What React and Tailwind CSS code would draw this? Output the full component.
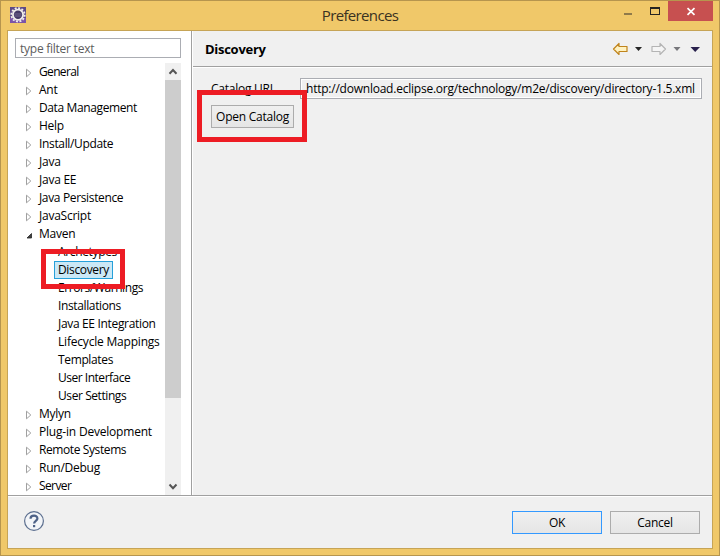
import React from 'react';

const TREE = [
  { t: 'General', k: 'tracking-[-0.65px]' },
  { t: 'Ant' },
  { t: 'Data Management', k: 'tracking-[-0.38px]' },
  { t: 'Help' },
  { t: 'Install/Update', k: 'tracking-[-0.35px]' },
  { t: 'Java' },
  { t: 'Java EE' },
  { t: 'Java Persistence', k: 'tracking-[-0.35px]' },
  { t: 'JavaScript' },
  { t: 'Maven', open: true },
  { t: 'Archetypes', child: true, k: 'tracking-[-0.35px]' },
  { t: 'Discovery', child: true, selected: true, k: 'tracking-[-0.35px]' },
  { t: 'Errors/Warnings', child: true, k: 'tracking-[-0.42px]' },
  { t: 'Installations', child: true, k: 'tracking-[-0.37px]' },
  { t: 'Java EE Integration', child: true, k: 'tracking-[-0.33px]' },
  { t: 'Lifecycle Mappings', child: true, k: 'tracking-[-0.2px]' },
  { t: 'Templates', child: true, k: 'tracking-[-0.36px]' },
  { t: 'User Interface', child: true, k: 'tracking-[-0.48px]' },
  { t: 'User Settings', child: true, k: 'tracking-[-0.42px]' },
  { t: 'Mylyn' },
  { t: 'Plug-in Development', k: 'tracking-[-0.2px]' },
  { t: 'Remote Systems', k: 'tracking-[-0.4px]' },
  { t: 'Run/Debug' },
  { t: 'Server', k: 'tracking-[-0.6px]' },
];

function Twisty({ open }) {
  return (
    <svg className="h-[18px] w-[7px] shrink-0" viewBox="0 0 7 18">
      {open ? (
        <path d="M5.5 8.5V13H1Z" fill="#404040" stroke="#262626" strokeWidth="0.8" />
      ) : (
        <path d="M0.5 6.2V13.8L4.8 10Z" fill="#fff" stroke="#a0a0a0" />
      )}
    </svg>
  );
}

function Row({ item }) {
  if (item.child) {
    return (
      <div className={`flex h-[18px] pl-[39px] leading-[18px] ${item.k || ''}`}>
        <span
          className={
            item.selected
              ? 'relative w-[59px] border border-[#26a0da] bg-[#cbe8f6] pl-[3px] leading-[16px]'
              : 'pl-1'
          }
        >
          {item.t}
          {item.selected && (
            <span className="absolute -left-[14px] -top-[13px] h-[40px] w-[84px] border-[5px] border-[#ed1c24]" />
          )}
        </span>
      </div>
    );
  }
  return (
    <div className={`flex h-[18px] pl-[11px] leading-[18px] ${item.k || ''}`}>
      <Twisty open={item.open} />
      <span className="ml-[6px]">{item.t}</span>
    </div>
  );
}

function EclipseIcon() {
  return (
    <svg className="mt-[6px] h-4 w-4" viewBox="0 0 16 16">
      <rect width="16" height="16" fill="#5d4a86" />
      <path d="M0 11h16v5H0z" fill="#7b54a8" />
      <circle cx="8" cy="7.8" r="6.7" fill="none" stroke="#efedeb" strokeWidth="1.8" strokeDasharray="2 1.5" />
      <circle cx="8" cy="7.8" r="5.1" fill="#453a66" stroke="#efedeb" strokeWidth="1.8" />
      <path d="M4.2 7h7.6M4.4 9h7.2" stroke="#7e749b" strokeWidth="0.8" />
    </svg>
  );
}

function TitleBar() {
  return (
    <div className="relative flex h-[29px] pl-[9px]">
      <EclipseIcon />
      <div className="absolute inset-x-0 top-[3px] text-center text-[15px] leading-[22px] tracking-[-0.65px] text-[#3a3222]">
        Preferences
      </div>
      <div className="ml-auto mr-[6px] flex">
        <svg className="h-5 w-[45px]" viewBox="0 0 45 20">
          <path d="M1 12h8v2H1z" fill="#8f7a4a" />
          <path d="M27 6h10v8H27zM28 8v5h8V8z" fillRule="evenodd" fill="#262421" />
        </svg>
        <div className="h-5 w-[45px] bg-[#c75050]">
          <svg className="h-5 w-[45px]" viewBox="0 0 45 20">
            <path d="M19.5 7.2l7 6.6M26.5 7.2l-7 6.6" stroke="#fff" strokeWidth="1.7" />
          </svg>
        </div>
      </div>
    </div>
  );
}

function Sidebar() {
  return (
    <div className="w-[184px] shrink-0 border-r border-[#a0a0a0] bg-white pt-[7px]">
      <div className="ml-[7px] h-5 w-[166px] border border-[#abadb3] pl-[4px] leading-[19px] text-[#5c5c5c]">
        type filter text
      </div>
      <div className="mt-[5px] flex h-[432px] pl-[7px]">
        <div className="w-[150px] whitespace-nowrap">
          {TREE.map((item) => (
            <Row key={item.t} item={item} />
          ))}
        </div>
        <div className="flex h-[432px] w-4 flex-col bg-[#f0f0f0]">
          <svg className="h-[17px] w-4" viewBox="0 0 16 17">
            <path d="M4.5 10.7L8 7l3.5 3.7" fill="none" stroke="#555" strokeWidth="2" />
          </svg>
          <div className="h-[318px] bg-[#cdcdcd]" />
          <svg className="mt-auto h-[17px] w-4" viewBox="0 0 16 17">
            <path d="M4.5 6.5L8 10.2l3.5-3.7" fill="none" stroke="#555" strokeWidth="2" />
          </svg>
        </div>
      </div>
    </div>
  );
}

function NavIcons() {
  return (
    <svg className="ml-auto mr-2 h-[18px] w-[92px]" viewBox="0 0 92 18">
      <path
        d="M1.5 9L7 3.5V6.5h8v5H7v3z"
        fill="#fff2c0"
        stroke="#c0841c"
        strokeWidth="1.2"
        strokeLinejoin="round"
      />
      <path d="M23 7h7l-3.5 4z" fill="#262626" />
      <path
        d="M53.5 9L48 3.5V6.5h-8v5h8v3z"
        fill="#f5f5f5"
        stroke="#b4b4b4"
        strokeWidth="1.2"
        strokeLinejoin="round"
      />
      <path d="M61.5 7h7L65 11z" fill="#77777b" />
      <path d="M78.5 7h9.5L83.2 12z" fill="#28204c" />
    </svg>
  );
}

function Content() {
  return (
    <div className="flex-1 border-l border-white">
      <div className="flex h-[36px] items-center border-b border-[#a0a0a0] pl-3">
        <h1 className="pt-px text-[13px] font-bold leading-[18px] tracking-[-0.28px]">Discovery</h1>
        <NavIcons />
      </div>
      <div className="border-t border-white pl-[18px] pt-[10px]">
        <div className="flex">
          <span className="w-[89px] shrink-0 leading-[21px]">Catalog URL</span>
          <div className="h-[21px] w-[402px] whitespace-nowrap border border-[#abadb3]">
            <div className="h-[19px] border border-white pl-[4px] leading-[17px] tracking-[-0.23px]">
              http://download.eclipse.org/technology/m2e/discovery/directory-1.5.xml
            </div>
          </div>
        </div>
        <div className="relative mt-[6px] h-[23px] w-[83px] border border-[#acacac] bg-gradient-to-b from-[#f0f0f0] to-[#e5e5e5] text-center leading-[22px]">
          <span className="whitespace-nowrap">Open Catalog</span>
          <span className="absolute -left-[15px] -top-[16px] h-[52px] w-[110px] border-[5px] border-[#ed1c24]" />
        </div>
      </div>
    </div>
  );
}

function Footer() {
  return (
    <div className="flex h-[52px] border-t border-white pt-[14px]">
      <svg className="ml-[15px] h-[22px] w-[22px]" viewBox="0 0 22 22">
        <circle cx="11" cy="10" r="9.4" fill="#f3f5f8" stroke="#5c6f8f" strokeWidth="1.2" />
        <path d="M7.5 7.8C7.6 3.7 14.5 3.7 14.4 7.6c-.1 2.2-3.3 2.3-3.3 4.9" fill="none" stroke="#4e6287" strokeWidth="2.2" />
        <path d="M10 14h2.2v2.2H10z" fill="#4e6287" />
      </svg>
      <div className="ml-auto mr-[12px] flex gap-2 text-center leading-[22px]">
        <div className="h-[23px] w-[90px] border border-[#3399ff] bg-gradient-to-b from-[#f0f0f0] to-[#e5e5e5]">OK</div>
        <div className="h-[23px] w-[90px] border border-[#acacac] bg-gradient-to-b from-[#f0f0f0] to-[#e5e5e5]">
          Cancel
        </div>
      </div>
    </div>
  );
}

export default function App() {
  return (
    <div className="h-[556px] w-[720px] overflow-hidden border border-[#b6954e] bg-[#f0c869] font-['Open_Sans','Noto_Sans',sans-serif] text-[12px] tracking-[-0.25px] text-black">
      <TitleBar />
      <div className="ml-[6px] flex h-[519px] w-[706px] flex-col border border-[#c6a456] bg-[#f0f0f0]">
        <div className="flex h-[465px] border-b border-[#a0a0a0]">
          <Sidebar />
          <Content />
        </div>
        <Footer />
      </div>
    </div>
  );
}
